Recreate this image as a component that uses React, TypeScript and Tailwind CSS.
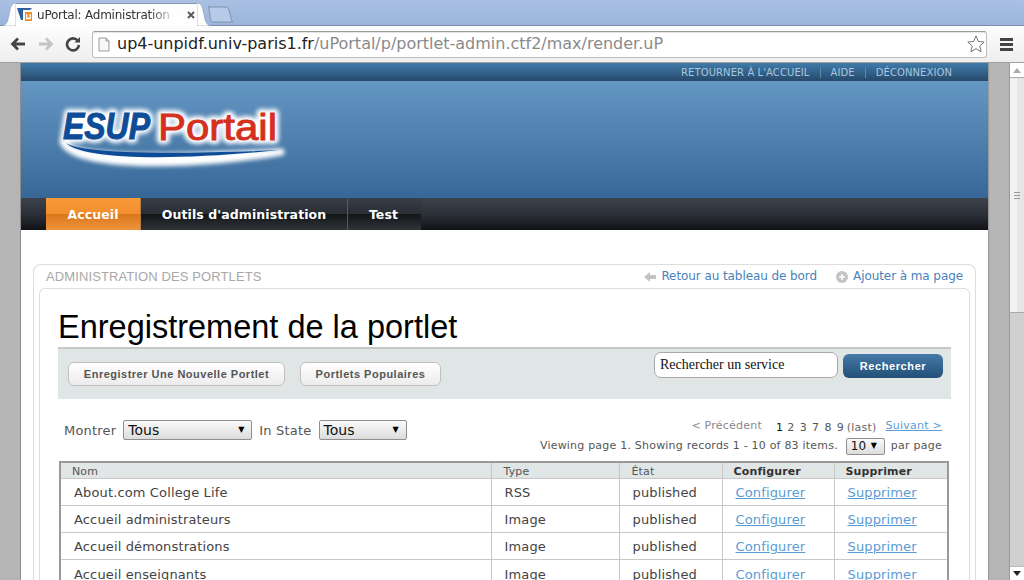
import React from "react";

const dj = "font-['DejaVu_Sans',sans-serif]";
const lib = "font-['Liberation_Sans',sans-serif]";

function Favicon() {
  return (
    <svg width="16" height="16" viewBox="0 0 16 16" className="shrink-0">
      <path d="M0 1 H15 L13 3 H6 L6 13 H4 Z" fill="#2f5f9e" />
      <rect x="8" y="5" width="7" height="9" fill="#f08a24" />
      <path d="M9.8 7 V11.5 H13.2 V7" fill="none" stroke="#fff" strokeWidth="1.3" />
    </svg>
  );
}

function Logo() {
  return (
    <svg width="250" height="80" viewBox="0 0 250 80" className="ml-[34px] mt-[19px] block">
      <defs>
        <filter id="glow" x="-10%" y="-20%" width="120%" height="140%">
          <feGaussianBlur stdDeviation="2" />
        </filter>
      </defs>
      <g filter="url(#glow)" fill="#ffffff" stroke="#ffffff" strokeWidth="8" strokeLinejoin="round">
        <text x="8" y="39" fontFamily="Liberation Sans" fontWeight="bold" fontStyle="italic" fontSize="36" textLength="87" lengthAdjust="spacingAndGlyphs">ESUP</text>
        <text x="103" y="40" fontFamily="Liberation Sans" fontSize="37" textLength="119" lengthAdjust="spacingAndGlyphs">Portail</text>
        <path d="M8 42 C16 58 90 60 226 52 C 160 64 22 72 8 42 Z" strokeWidth="7" />
      </g>
      <text x="8" y="39" fill="#0e4c97" stroke="#0e4c97" strokeWidth="1" fontFamily="Liberation Sans" fontWeight="bold" fontStyle="italic" fontSize="36" textLength="87" lengthAdjust="spacingAndGlyphs">ESUP</text>
      <text x="103" y="40" fill="#d5301e" stroke="#d5301e" strokeWidth="0.9" fontFamily="Liberation Sans" fontSize="37" textLength="119" lengthAdjust="spacingAndGlyphs">Portail</text>
      <path d="M8 40 C12 52 90 56 224 50 C 130 60 22 62 8 40 Z" fill="#0e4c97" />
    </svg>
  );
}

function NavItem({ label, w, active, last }: { label: string; w: string; active?: boolean; last?: boolean }) {
  return (
    <div
      className={
        w +
        " h-full flex items-center justify-center pt-[2px] text-[12.5px] font-bold text-white tracking-[0.1px] " +
        (active
          ? "bg-[linear-gradient(#f89a3a_0%,#f28f2e_49%,#d9761a_50%,#f0943c_100%)] border-r border-[#b87a3e]"
          : "bg-[linear-gradient(#363e4a_0%,#2a2e33_50%,#121416_50%,#30343a_100%)] ") +
        (!active && !last ? "border-r border-[#555a60]" : "") +
        (last ? "pr-[2px]" : "")
      }
    >
      {label}
    </div>
  );
}

const rows: [string, string][] = [
  ["About.com College Life", "RSS"],
  ["Accueil administrateurs", "Image"],
  ["Accueil démonstrations", "Image"],
  ["Accueil enseignants", "Image"],
];

function Select({ label, w, h = "h-[20px]", size = "text-[14px]" }: { label: string; w: string; h?: string; size?: string }) {
  return (
    <div className={w + " " + h + " " + size + " flex items-center justify-between rounded-[2px] border border-[#8f8f8f] bg-[linear-gradient(#fafafa,#dcdcdc)] pl-[4px] pr-[7px] text-[#111]"}>
      <span>{label}</span>
      <span className="text-[8px] leading-none text-black">▼</span>
    </div>
  );
}

export default function App() {
  return (
    <div className={"w-[1024px] h-[580px] overflow-hidden flex flex-col bg-white " + dj}>
      {/* Tab strip */}
      <div className="h-[26px] shrink-0 flex items-end bg-[linear-gradient(#a9c0e3,#9bb5dc)] border-b border-[#7d8da8] pl-[2px]">
        <svg width="14" height="23" viewBox="0 0 14 23" className="shrink-0 -mb-px">
          <path d="M0 23 C6 22 6 16 8 7 C9 2 11 0 14 0 V23 Z" fill="#ffffff" stroke="#8a94a8" strokeWidth="0.6" />
        </svg>
        <div className="w-[181px] h-[23px] -mb-px bg-[linear-gradient(#fbfcfe,#ffffff)] border-t border-[#8a94a8] flex items-center pl-[1px]">
          <Favicon />
          <div className="ml-[4px] w-[140px] whitespace-nowrap text-[12px] tracking-[-0.22px] text-[#333] [mask-image:linear-gradient(to_right,black_80%,transparent_100%)]">
            uPortal: Administration
          </div>
          <svg width="8" height="8" viewBox="0 0 8 8" className="ml-[10px] shrink-0">
            <path d="M1 1 L7 7 M7 1 L1 7" stroke="#555" strokeWidth="1.8" />
          </svg>
        </div>
        <svg width="14" height="23" viewBox="0 0 14 23" className="shrink-0 -mb-px">
          <path d="M14 23 C8 22 8 16 6 7 C5 2 3 0 0 0 V23 Z" fill="#ffffff" stroke="#8a94a8" strokeWidth="0.6" />
        </svg>
        <svg width="27" height="17" viewBox="0 0 27 17" className="shrink-0 ml-[-4px] mb-[2px]">
          <path d="M1 1 H18 C21 1 22 3 23 8 C24 13 25 16 26 16 H6 C4 16 3 13 3 8 C2 4 2 1 1 1 Z" fill="#b7cbe9" stroke="#7f90ae" strokeWidth="1" />
        </svg>
      </div>

      {/* Toolbar */}
      <div className="h-[37px] shrink-0 flex items-center bg-[linear-gradient(#fdfdfd,#eeeeee)] border-b border-[#a0a0a0] pl-[10px]">
        <svg width="16" height="14" viewBox="0 0 16 14" className="shrink-0">
          <path d="M15 7 H4 M8 1.5 L2.5 7 L8 12.5" fill="none" stroke="#444" strokeWidth="2.8" />
        </svg>
        <svg width="16" height="14" viewBox="0 0 16 14" className="ml-[12px] shrink-0">
          <path d="M1 7 H12 M8 1.5 L13.5 7 L8 12.5" fill="none" stroke="#c4c4c4" strokeWidth="2.8" />
        </svg>
        <svg width="16" height="16" viewBox="0 0 16 16" className="ml-[11px] shrink-0">
          <path d="M13 5 A6 6 0 1 0 14 9" fill="none" stroke="#444" strokeWidth="2.6" />
          <path d="M9.5 6.5 H15 V1 Z" fill="#444" />
        </svg>
        <div className="ml-[11px] w-[895px] h-[27px] rounded-[3px] border border-[#bdbdbd] border-t-[#9a9a9a] bg-white flex items-center pl-[5px] pr-[1px] shadow-[inset_0_1px_1px_#e4e4e4]">
          <svg width="12" height="15" viewBox="0 0 12 15" className="shrink-0">
            <path d="M1 1 H8 L11 4 V14 H1 Z" fill="#f8f8f8" stroke="#999" strokeWidth="1" />
            <path d="M8 1 V4 H11" fill="none" stroke="#999" strokeWidth="1" />
          </svg>
          <div className="ml-[7px] text-[16px] tracking-[-0.01px] whitespace-nowrap text-[#222]">
            up4-unpidf.univ-paris1.fr<span className="text-[#8a8a8a]">/uPortal/p/portlet-admin.ctf2/max/render.uP</span>
          </div>
          <svg width="18" height="18" viewBox="0 0 18 18" className="ml-auto shrink-0">
            <path d="M9 1 L11.4 6.5 L17.2 7 L12.8 10.9 L14.1 16.8 L9 13.7 L3.9 16.8 L5.2 10.9 L0.8 7 L6.6 6.5 Z" fill="#fff" stroke="#777" strokeWidth="1" />
          </svg>
        </div>
        <div className="ml-[13px] w-[13px] flex flex-col gap-[2px] shrink-0">
          <div className="h-[3px] bg-[#444]" />
          <div className="h-[3px] bg-[#444]" />
          <div className="h-[3px] bg-[#444]" />
        </div>
      </div>

      {/* Viewport */}
      <div className="flex flex-1 min-h-0">
        <div className="w-[21px] shrink-0 bg-[#b5b5b5] border-r border-[#8c8c8c]" />
        <div className="w-[967px] shrink-0 flex flex-col bg-white overflow-hidden">
          {/* Utility bar */}
          <div className="h-[18px] shrink-0 flex items-center justify-end pr-[36px] bg-[linear-gradient(#3f7bab,#27496a)] text-[10px] tracking-[0.09px] text-[#a9c6de] whitespace-nowrap">
            <span>RETOURNER À L'ACCUEIL</span>
            <span className="ml-[10px] mr-[10px] h-[11px] w-px bg-[#5f88ab]" />
            <span>AIDE</span>
            <span className="ml-[10px] mr-[10px] h-[11px] w-px bg-[#5f88ab]" />
            <span>DÉCONNEXION</span>
          </div>
          {/* Banner */}
          <div className="h-[117px] shrink-0 bg-[linear-gradient(#6597c3,#376797)] overflow-hidden">
            <Logo />
          </div>
          {/* Nav */}
          <div className="h-[32px] shrink-0 flex pl-[25px] bg-[linear-gradient(#3c424c_0%,#2c3038_50%,#101216_100%)]">
            <NavItem label="Accueil" w="w-[95px]" active />
            <NavItem label="Outils d'administration" w="w-[207px]" />
            <NavItem label="Test" w="w-[73px]" last />
          </div>

          {/* Portlet */}
          <div className="mt-[34px] ml-[12px] w-[943px] flex-1 rounded-t-[8px] border border-b-0 border-[#dddddd] px-[5px]">
            <div className="h-[23px] flex items-center justify-between pl-[7px] pr-[7px] pb-[2px]">
              <span className={"mt-[2px] text-[13px] tracking-[0.11px] text-[#a8a8a8] " + lib}>ADMINISTRATION DES PORTLETS</span>
              <div className="flex items-center text-[12px] tracking-[-0.08px] text-[#4a82b8]">
                <svg width="12" height="10" viewBox="0 0 12 10" className="mr-[5px] mt-[2px]">
                  <path d="M0 5 L6 0 V3 H12 V7 H6 V10 Z" fill="#c3c3c3" />
                </svg>
                <span>Retour au tableau de bord</span>
                <svg width="12" height="12" viewBox="0 0 12 12" className="ml-[19px] mr-[5px] mt-[2px]">
                  <circle cx="6" cy="6" r="6" fill="#c3c3c3" />
                  <path d="M6 3 V9 M3 6 H9" stroke="#fff" strokeWidth="1.6" />
                </svg>
                <span>Ajouter à ma page</span>
              </div>
            </div>
            <div className="h-[300px] rounded-t-[6px] border border-b-0 border-[#dddddd] pl-[18px] pr-[18px]">
              <h1 className={"mt-[19px] mb-[1px] h-[38px] text-[32.5px] leading-[38px] text-black " + lib}>Enregistrement de la portlet</h1>
              {/* Toolbar panel */}
              <div className="h-[52px] border-t-2 border-[#c8c8c8] bg-[#e0e6e6] flex items-start pl-[10px] pr-[8px]">
                <div className={"mt-[13px] w-[217px] h-[24px] flex items-center justify-center rounded-[6px] border border-[#c0c0c0] bg-[linear-gradient(#ffffff,#ececec)] text-[11px] font-bold text-[#555] " + lib}>
                  <span className="tracking-[0.5px]">Enregistrer Une Nouvelle Portlet</span>
                </div>
                <div className={"mt-[13px] ml-[15px] w-[141px] h-[24px] flex items-center justify-center rounded-[6px] border border-[#c0c0c0] bg-[linear-gradient(#ffffff,#ececec)] text-[11px] font-bold text-[#555] " + lib}>
                  <span className="tracking-[0.5px]">Portlets Populaires</span>
                </div>
                <div className="mt-[3px] ml-auto w-[184px] h-[26px] flex items-center rounded-[7px] border border-[#a8a8a8] bg-white pl-[5px] pb-[2px] text-[14px] text-[#111] font-['Liberation_Serif',serif]">
                  Rechercher un service
                </div>
                <div className={"mt-[5px] ml-[5px] w-[100px] h-[24px] flex items-center justify-center rounded-[6px] bg-[linear-gradient(#457ba8,#234f77)] text-[11px] font-bold text-white " + lib}>
                  <span className="tracking-[0.6px]">Rechercher</span>
                </div>
              </div>
              {/* Filters */}
              <div className="h-[62px] flex justify-between text-[13px] tracking-[0.2px] text-[#555]">
                <div className="mt-[21px] ml-[6px] flex items-start">
                  <span className="leading-[22px]">Montrer</span>
                  <Select label="Tous" w="w-[129px] ml-[7px] tracking-normal" />
                  <span className="ml-[7px] leading-[22px]">In State</span>
                  <Select label="Tous" w="w-[88px] ml-[7px] tracking-normal" />
                </div>
                <div className="mt-[19px] mr-[9px] flex flex-col items-end text-[11px] tracking-[0.24px]">
                  <div className="h-[17px] flex items-center">
                    <span className="text-[#888]">&lt; Précédent</span>
                    <span className="ml-[14px] mt-[3px] text-[#111]">1</span>
                    <span className="ml-[4px] mt-[3px] tracking-[0.93px] text-[#555]">2 3 7 8 9</span>
                    <span className="ml-[2px] mt-[3px] text-[#666]">(last)</span>
                    <span className="ml-[9px] text-[#5b9bd5] underline">Suivant &gt;</span>
                  </div>
                  <div className="mt-[2px] h-[18px] flex items-center text-[#555]">
                    <span className="tracking-[0.21px]">Viewing page 1. Showing records 1 - 10 of 83 items.</span>
                    <Select label="10" w="w-[39px] ml-[8px] tracking-normal" h="h-[17px]" size="text-[12px]" />
                    <span className="ml-[6px]">par page</span>
                  </div>
                </div>
              </div>
              {/* Table */}
              <table className="ml-[1px] w-[890px] table-fixed border-collapse border-2 border-b-0 border-[#999] text-[13px] tracking-[0.14px] text-[#444]">
                <colgroup>
                  <col className="w-[431px]" />
                  <col className="w-[128px]" />
                  <col className="w-[103px]" />
                  <col className="w-[112px]" />
                  <col className="w-[114px]" />
                </colgroup>
                <thead>
                  <tr className="h-[16px] bg-[#e0e6e6] text-[11px] leading-[13px]">
                    <th className="pl-[11px] pt-[2px] text-left font-normal text-[#555] border-r border-[#c8c8c8]">Nom</th>
                    <th className="pl-[12px] pt-[2px] text-left font-normal text-[#555] border-r border-[#c8c8c8]">Type</th>
                    <th className="pl-[12px] pt-[2px] text-left font-normal text-[#555] border-r border-[#c8c8c8]">État</th>
                    <th className="pl-[11px] pt-[2px] text-left font-bold text-[#333] border-r border-[#c8c8c8]">Configurer</th>
                    <th className="pl-[11px] pt-[2px] text-left font-bold text-[#333]">Supprimer</th>
                  </tr>
                </thead>
                <tbody>
                  {rows.map(([name, type]) => (
                    <tr key={name} className="h-[27px] border-t border-[#c8c8c8]">
                      <td className="pl-[13px] pt-[2px] border-r border-[#c8c8c8]">{name}</td>
                      <td className="pl-[13px] pt-[2px] border-r border-[#c8c8c8]">{type}</td>
                      <td className="pl-[13px] pt-[2px] border-r border-[#c8c8c8]">published</td>
                      <td className="pl-[13px] pt-[2px] border-r border-[#c8c8c8] text-[#5b9bd5] underline">Configurer</td>
                      <td className="pl-[13px] pt-[2px] text-[#5b9bd5] underline">Supprimer</td>
                    </tr>
                  ))}
                </tbody>
              </table>
            </div>
          </div>
        </div>
        <div className="w-[21px] shrink-0 bg-[#b5b5b5] border-l border-[#999]" />
        {/* Scrollbar */}
        <div className="w-[15px] shrink-0 flex flex-col bg-[#d0d0d0] border-l border-[#999]">
          <div className="h-[15px] flex items-center justify-center bg-white border-b border-[#aaa]">
            <svg width="8" height="5" viewBox="0 0 8 5"><path d="M4 0 L8 5 H0 Z" fill="#aaa" /></svg>
          </div>
          <div className="h-[235px] bg-[linear-gradient(to_right,#f2f2f2_50%,#e6e6e6_50%)] border-b border-[#aaa] flex flex-col items-center justify-center gap-[2px]">
            <div className="w-[6px] h-px bg-[#999]" />
            <div className="w-[6px] h-px bg-[#999]" />
            <div className="w-[6px] h-px bg-[#999]" />
          </div>
          <div className="flex-1" />
          <div className="h-[14px] flex items-center justify-center bg-white border-t border-[#bbb]">
            <svg width="8" height="5" viewBox="0 0 8 5"><path d="M0 0 H8 L4 5 Z" fill="#222" /></svg>
          </div>
        </div>
      </div>
    </div>
  );
}
